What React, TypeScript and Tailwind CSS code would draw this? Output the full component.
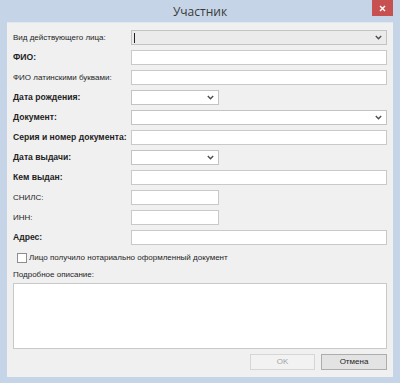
import React from 'react';

const FONT = "'Liberation Sans', Arial, sans-serif";

function Chevron() {
  return (
    <svg width="7" height="5" viewBox="0 0 7 5" className="shrink-0">
      <polyline points="0.8,1 3.5,3.8 6.2,1" fill="none" stroke="#4a4a4a" strokeWidth="1.3" />
    </svg>
  );
}

function TextBox({ short }: { short?: boolean }) {
  return (
    <div
      className={`h-[15px] border border-[#c9c9c9] bg-white ${short ? 'w-[88px]' : 'w-full'}`}
    />
  );
}

function Combo({ short, gray, caret }: { short?: boolean; gray?: boolean; caret?: boolean }) {
  return (
    <div
      className={`flex h-[15px] items-center justify-between border border-[#c3c3c3] pl-[2px] pr-[4px] ${
        gray ? 'bg-[#ebebeb]' : 'bg-white'
      } ${short ? 'w-[88px]' : 'w-full'}`}
    >
      {caret ? <div className="h-[10px] w-px bg-[#222]" /> : <span />}
      <Chevron />
    </div>
  );
}

type Row = {
  label: string;
  bold?: boolean;
  field: React.ReactNode;
};

const rows: Row[] = [
  { label: 'Вид действующего лица:', field: <Combo gray caret /> },
  { label: 'ФИО:', bold: true, field: <TextBox /> },
  { label: 'ФИО латинскими буквами:', field: <TextBox /> },
  { label: 'Дата рождения:', bold: true, field: <Combo short /> },
  { label: 'Документ:', bold: true, field: <Combo /> },
  { label: 'Серия и номер документа:', bold: true, field: <TextBox /> },
  { label: 'Дата выдачи:', bold: true, field: <Combo short /> },
  { label: 'Кем выдан:', bold: true, field: <TextBox /> },
  { label: 'СНИЛС:', field: <TextBox short /> },
  { label: 'ИНН:', field: <TextBox short /> },
  { label: 'Адрес:', bold: true, field: <TextBox /> },
];

export default function App() {
  return (
    <div
      className="flex h-[383px] w-[400px] flex-col bg-[#c5d5e7] text-[#1e1e1e]"
      style={{ fontFamily: FONT }}
    >
      {/* title bar */}
      <div className="relative flex h-[22px] shrink-0 items-center justify-center">
        <span
          className="pt-[2px] text-[12px] text-[#3a3a3a]"
          style={{ fontFamily: "'Open Sans', 'Noto Sans', sans-serif" }}
        >
          Участник
        </span>
        <div className="absolute right-[7px] top-0 flex h-[16px] w-[21px] items-center justify-center bg-[#c75050]">
          <svg width="7" height="7" viewBox="0 0 7 7">
            <path d="M1 1L6 6M6 1L1 6" stroke="#fff" strokeWidth="1.4" />
          </svg>
        </div>
      </div>

      {/* client area */}
      <div className="mx-[7px] mb-[6px] flex flex-1 flex-col border-t border-[#dfe7f0] bg-[#f0f0f0] pl-[6px] pr-[6px] pt-[7px]">
        <div className="grid grid-cols-[118px_1fr] gap-y-[5px]">
          {rows.map((r) => (
            <React.Fragment key={r.label}>
              <div
                className={`flex h-[15px] items-center whitespace-nowrap ${
                  r.bold ? 'text-[8.6px] font-bold' : 'text-[8px]'
                }`}
              >
                {r.label}
              </div>
              <div className="flex items-center">{r.field}</div>
            </React.Fragment>
          ))}
        </div>

        <label className="mt-[7px] flex h-[12px] items-center gap-[2px] pl-[4px] text-[8px]">
          <span className="h-[10px] w-[10px] border border-[#8d8d8d] bg-white" />
          Лицо получило нотариально оформленный документ
        </label>

        <div className="mt-[5px] text-[8px] leading-[12px]">Подробное описание:</div>
        <div className="mt-[2px] h-[66px] border border-[#c9c9c9] bg-white" />

        <div className="mt-[5px] flex justify-end gap-[6px]">
          <button className="flex h-[16px] w-[65px] items-center justify-center border border-[#d6d6d6] bg-[#f2f2f2] text-[8px] text-[#a3a3a3]">
            OK
          </button>
          <button className="flex h-[16px] w-[66px] items-center justify-center border border-[#adadad] bg-[#e3e3e3] text-[8px] text-[#1e1e1e]">
            Отмена
          </button>
        </div>
      </div>
    </div>
  );
}
